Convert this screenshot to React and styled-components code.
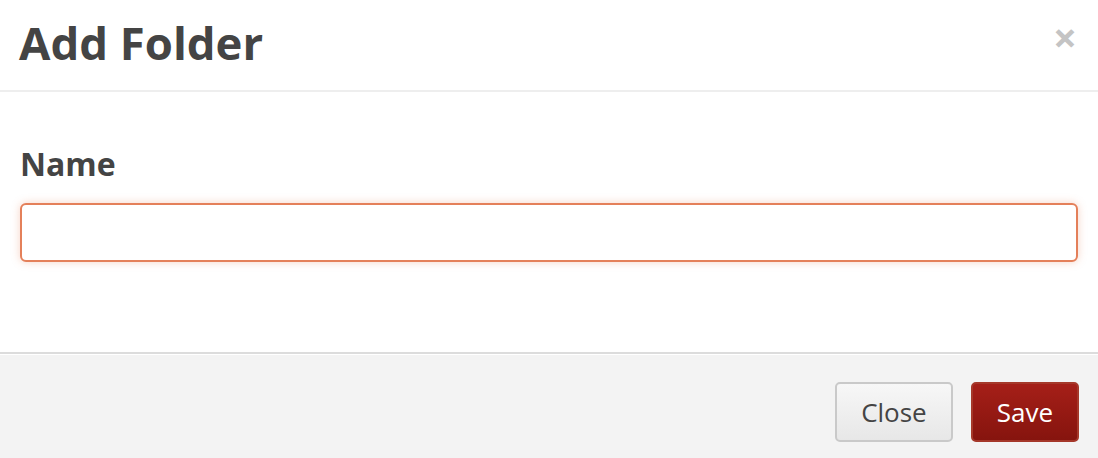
import React from "react";
import styled, { createGlobalStyle } from "styled-components";

const GlobalStyle = createGlobalStyle`
  html, body {
    margin: 0;
    padding: 0;
    background: #fff;
    font-family: "Open Sans", "Liberation Sans", sans-serif;
    color: #444;
  }
`;

const Modal = styled.div`
  width: 1098px;
  height: 458px;
  display: flex;
  flex-direction: column;
  background: #fff;
  overflow: hidden;
`;

const Header = styled.div`
  height: 92px;
  box-sizing: border-box;
  display: flex;
  align-items: center;
  justify-content: space-between;
  padding: 0 21px 2px 19px;
  border-bottom: 2px solid #eeeeee;
`;

const Title = styled.h4`
  margin: 0;
  font-size: 45.5px;
  font-weight: 700;
  color: #444;
  line-height: 1;
  padding-bottom: 2px;
`;

const CloseX = styled.button`
  border: 0;
  background: none;
  padding: 0;
  color: #c4c4c4;
  font-family: "Open Sans", sans-serif;
  font-size: 42px;
  font-weight: 700;
  line-height: 1;
  cursor: pointer;
  margin-top: -14px;
`;

const Body = styled.div`
  flex: 1;
  padding: 0 20px;
`;

const Label = styled.label`
  display: block;
  margin-top: 52px;
  font-size: 32px;
  font-weight: 700;
  color: #444;
  line-height: 40px;
`;

const Input = styled.input`
  display: block;
  box-sizing: border-box;
  width: 100%;
  height: 59px;
  margin-top: 19px;
  border: 2px solid #e4805a;
  border-radius: 6px;
  box-shadow: 0 0 8px rgba(228, 128, 90, 0.35);
  outline: none;
  font-family: inherit;
  font-size: 26px;
  padding: 0 14px;
`;

const Footer = styled.div`
  height: 106px;
  box-sizing: border-box;
  border-top: 2px solid #dcdcdc;
  box-shadow: inset 0 1px 0 #fff;
  background: #f3f3f3;
  display: flex;
  justify-content: flex-end;
  align-items: flex-start;
  gap: 18px;
  padding: 28px 19px 0 0;
`;

const Button = styled.button`
  height: 60px;
  box-sizing: border-box;
  border-radius: 5px;
  font-family: "Open Sans", sans-serif;
  font-size: 26px;
  padding: 0 24px;
  cursor: pointer;
  border: 2px solid ${(p) => (p.$primary ? "#a5382a" : "#c9c9c9")};
  color: ${(p) => (p.$primary ? "#fff" : "#444")};
  background: ${(p) =>
    p.$primary
      ? "linear-gradient(#a51f18, #86140e)"
      : "linear-gradient(#f7f7f7, #e7e7e7)"};
`;

export default function App() {
  return (
    <>
      <GlobalStyle />
      <Modal>
        <Header>
          <Title>Add Folder</Title>
          <CloseX aria-label="close">×</CloseX>
        </Header>
        <Body>
          <Label htmlFor="folder-name">Name</Label>
          <Input id="folder-name" type="text" />
        </Body>
        <Footer>
          <Button>Close</Button>
          <Button $primary>Save</Button>
        </Footer>
      </Modal>
    </>
  );
}
